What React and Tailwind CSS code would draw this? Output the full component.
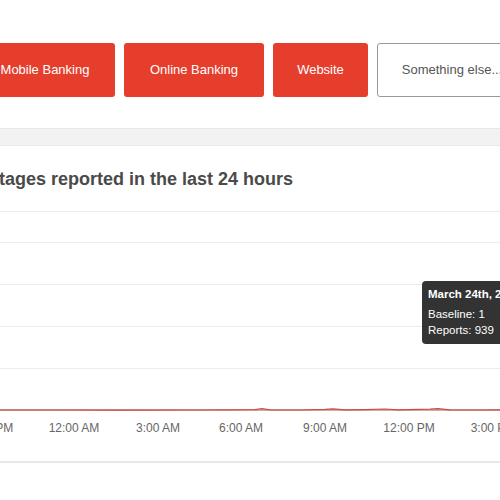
const buttons = [
  { label: "Mobile Banking", w: "w-[140px]", solid: true },
  { label: "Online Banking", w: "w-[140px]", solid: true },
  { label: "Website", w: "w-[95px]", solid: true },
  { label: "Something else...", w: "w-[150px]", solid: false },
];

const ticks = [
  { label: "9:00 PM", x: -9 },
  { label: "12:00 AM", x: 74 },
  { label: "3:00 AM", x: 158 },
  { label: "6:00 AM", x: 241 },
  { label: "9:00 AM", x: 325 },
  { label: "12:00 PM", x: 409 },
  { label: "3:00 PM", x: 493 },
];

const gridY = [0, 31, 73, 115, 157];

// small bumps along the baseline
const points = [
  [0, 199], [60, 199], [120, 199.2], [200, 199], [255, 198.6], [262, 197.6], [270, 198.8],
  [300, 199], [325, 198.4], [333, 197.8], [345, 198.8], [365, 198.6], [385, 198], [398, 198.8],
  [430, 198.2], [438, 197.6], [450, 198.8], [480, 199], [500, 198.8],
];

function Chart() {
  return (
    <div className="relative h-[200px]">
      <svg width="500" height="200" className="block">
        {gridY.map((y) => (
          <line key={y} x1="0" x2="500" y1={y + 0.5} y2={y + 0.5} stroke="#ececec" strokeWidth="1.2" />
        ))}
        <line x1="0" x2="500" y1="199" y2="199" stroke="#7a6a6a" strokeWidth="1" />
        <polyline
          points={points.map((p) => p.join(",")).join(" ")}
          fill="none"
          stroke="#d9473a"
          strokeWidth="1.2"
        />
      </svg>
      <div className="absolute left-[422px] top-[70px] w-[110px] rounded-[4px] bg-[#333] px-[6px] pt-[5px] pb-[6px] text-[11.5px] leading-[16px] text-white">
        <div className="font-bold">March 24th, 2021</div>
        <div className="mt-[4px]">Baseline: 1</div>
        <div>Reports: 939</div>
      </div>
    </div>
  );
}

export default function App() {
  return (
    <div
      className="h-[500px] w-[500px] overflow-hidden bg-white"
      style={{ fontFamily: '"Liberation Sans", Arial, sans-serif' }}
    >
      <div className="ml-[-25px] flex gap-[9px] pt-[43px]">
        {buttons.map((b) => (
          <div
            key={b.label}
            className={`flex h-[54px] shrink-0 items-center justify-center rounded-[3px] text-[13px] ${b.w} ${
              b.solid
                ? "bg-[#e63e2d] text-white"
                : "border border-[#999] bg-white text-[#555]"
            }`}
          >
            {b.label}
          </div>
        ))}
      </div>

      <div className="mt-[31px] h-[18px] border-y border-[#e9e9e9] bg-[#f2f2f2]" />

      <div className="border-b-2 border-[#e8e8e8] pb-[8px]">
        <h2 className="ml-[-26px] pt-[22px] text-[18px] leading-[22px] font-bold text-[#4a4a4a]">
          Outages reported in the last 24 hours
        </h2>
        <div className="mt-[21px]">
          <Chart />
        </div>
        <div className="relative mt-[8px] h-[20px] text-[12px] text-[#666]">
          {ticks.map((t) => (
            <span
              key={t.label}
              className="absolute top-0 -translate-x-1/2 whitespace-nowrap"
              style={{ left: t.x }}
            >
              {t.label}
            </span>
          ))}
        </div>
        <div className="h-[14px]" />
      </div>
    </div>
  );
}
